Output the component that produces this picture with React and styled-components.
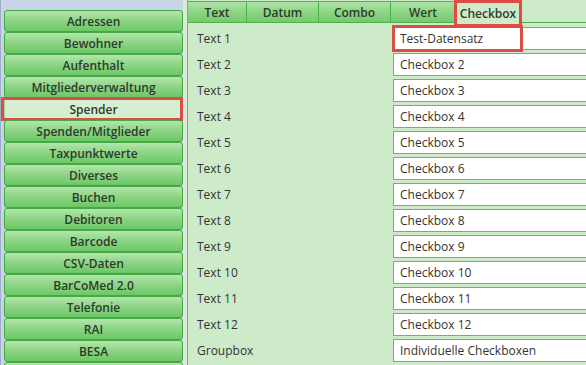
import React from 'react';
import styled, { createGlobalStyle } from 'styled-components';

const GlobalStyle = createGlobalStyle`
  html, body {
    margin: 0;
    padding: 0;
    overflow: hidden;
    background: #dfeedd;
    font-family: "Open Sans", "Noto Sans", sans-serif;
  }
`;

const Screen = styled.div`
  width: 586px;
  height: 365px;
  display: flex;
  overflow: hidden;
`;

const Sidebar = styled.div`
  width: 179px;
  flex-shrink: 0;
  background: #c7d5e7;
  border-left: 1px solid #9fb0c6;
  padding: 10px 0 0 3px;
  display: flex;
  flex-direction: column;
`;

const NavButton = styled.div`
  position: relative;
  flex-shrink: 0;
  height: 22px;
  box-sizing: border-box;
  display: flex;
  align-items: center;
  justify-content: center;
  font-size: 12px;
  font-weight: 600;
  color: #2f3a2f;
  border: 1px solid ${(p) => (p.$active ? '#9ed49a' : '#45a845')};
  border-radius: 3px;
  background: ${(p) =>
    p.$active
      ? '#d6efd2'
      : 'linear-gradient(to bottom, #b4e6ad 0%, #8fd687 45%, #6dc766 100%)'};
  ${(p) =>
    p.$marked &&
    `
    &::after {
      content: '';
      position: absolute;
      left: -4px;
      right: -1px;
      top: -2px;
      bottom: -2px;
      border: 3px solid #de4d45;
    }
  `}
`;

const Gap = styled.div`
  width: 4px;
  flex-shrink: 0;
  background: #dcecd9;
`;

const Panel = styled.div`
  flex: 1;
  display: flex;
  flex-direction: column;
  border-left: 1px solid #5fbf5c;
  background: #cdebc9;
`;

const TabStrip = styled.div`
  display: flex;
  height: 23px;
  padding-top: 1px;
  box-sizing: border-box;
  border-bottom: 1px solid #4fb04c;
  background: #cdebc9;
`;

const Tab = styled.div`
  position: relative;
  width: ${(p) => p.$w}px;
  box-sizing: border-box;
  display: flex;
  align-items: center;
  justify-content: center;
  padding-top: 1px;
  font-size: 12px;
  font-weight: 600;
  color: #2f3a2f;
  border-right: 1px solid #4fb04c;
  border-top: 1px solid #4fb04c;
  background: ${(p) =>
    p.$active
      ? '#cdebc9'
      : 'linear-gradient(to bottom, #aee3a7 0%, #8dd585 50%, #74ca6d 100%)'};
  ${(p) =>
    p.$active &&
    `
    margin-bottom: -1px;
    &::after {
      content: '';
      position: absolute;
      left: -2px;
      right: -2px;
      top: -2px;
      bottom: -4px;
      border: 3px solid #de4d45;
    }
  `}
`;

const Rows = styled.div`
  display: flex;
  flex-direction: column;
  padding-top: 2px;
`;

const Row = styled.div`
  display: flex;
  align-items: center;
  height: 26px;
`;

const Label = styled.div`
  width: 196px;
  padding-left: 9px;
  flex-shrink: 0;
  font-size: 12px;
  color: #333;
`;

const Field = styled.div`
  position: relative;
  flex: 1;
  height: 23px;
  box-sizing: border-box;
  margin-right: -4px;
  background: #fff;
  border: 1px solid #5fbf5c;
  display: flex;
  align-items: center;
  padding-left: 6px;
  font-size: 12px;
  color: #333;
  ${(p) =>
    p.$marked &&
    `
    &::after {
      content: '';
      position: absolute;
      left: -2px;
      top: -3px;
      width: 131px;
      height: 27px;
      box-sizing: border-box;
      border: 3px solid #de4d45;
    }
  `}
`;

const navItems = [
  'Adressen',
  'Bewohner',
  'Aufenthalt',
  'Mitgliederverwaltung',
  'Spender',
  'Spenden/Mitglieder',
  'Taxpunktwerte',
  'Diverses',
  'Buchen',
  'Debitoren',
  'Barcode',
  'CSV-Daten',
  'BarCoMed 2.0',
  'Telefonie',
  'RAI',
  'BESA',
  '',
];

const tabs = [
  { name: 'Text', w: 59 },
  { name: 'Datum', w: 72 },
  { name: 'Combo', w: 72 },
  { name: 'Wert', w: 65 },
  { name: 'Checkbox', w: 65, active: true },
];

const rows = [
  ['Text 1', 'Test-Datensatz'],
  ...Array.from({ length: 11 }, (_, i) => [`Text ${i + 2}`, `Checkbox ${i + 2}`]),
  ['Groupbox', 'Individuelle Checkboxen'],
];

const App = () => (
  <>
    <GlobalStyle />
    <Screen>
      <Sidebar>
        {navItems.map((item, i) => (
          <NavButton key={i} $active={item === 'Spender'} $marked={item === 'Spender'}>
            {item}
          </NavButton>
        ))}
      </Sidebar>
      <Gap />
      <Panel>
        <TabStrip>
          {tabs.map((t) => (
            <Tab key={t.name} $w={t.w} $active={t.active}>
              {t.name}
            </Tab>
          ))}
        </TabStrip>
        <Rows>
          {rows.map(([label, value], i) => (
            <Row key={label}>
              <Label>{label}</Label>
              <Field $marked={i === 0}>{value}</Field>
            </Row>
          ))}
        </Rows>
      </Panel>
    </Screen>
  </>
);

export default App;
